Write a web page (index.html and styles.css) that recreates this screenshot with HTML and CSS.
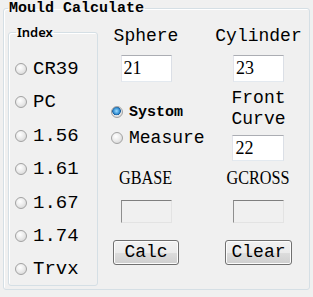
FILE: index.html
```html
<!DOCTYPE html>
<html>
<head>
<meta charset="utf-8">
<link rel="stylesheet" href="styles.css">
</head>
<body>
<fieldset class="calc">
  <legend class="calc-title">Mould Calculate</legend>
  <div class="calc-body">
    <fieldset class="index">
      <legend class="index-title">Index</legend>
      <div class="index-list">
        <label class="opt"><input type="radio" name="idx" class="radio"><span>CR39</span></label>
        <label class="opt"><input type="radio" name="idx" class="radio"><span>PC</span></label>
        <label class="opt"><input type="radio" name="idx" class="radio"><span>1.56</span></label>
        <label class="opt"><input type="radio" name="idx" class="radio"><span>1.61</span></label>
        <label class="opt"><input type="radio" name="idx" class="radio"><span>1.67</span></label>
        <label class="opt"><input type="radio" name="idx" class="radio"><span>1.74</span></label>
        <label class="opt"><input type="radio" name="idx" class="radio"><span>Trvx</span></label>
      </div>
    </fieldset>
    <div class="panel">
      <div class="lbl c1 r1">Sphere</div>
      <div class="lbl c2 r1">Cylinder</div>
      <input class="tb c1 r2" value="21">
      <input class="tb c2 r2" value="23">
      <div class="mode c1 r3">
        <label class="mopt mopt-small"><input type="radio" name="mode" class="radio" checked><span>Systom</span></label>
        <label class="mopt"><input type="radio" name="mode" class="radio"><span>Measure</span></label>
      </div>
      <div class="front c2 r3">
        <div class="lbl front-lbl">Front<br>Curve</div>
        <input class="tb" value="22">
      </div>
      <div class="glbl c1 r4">GBASE</div>
      <div class="glbl c2 r4">GCROSS</div>
      <input class="ro c1 r5" readonly>
      <input class="ro c2 r5" readonly>
      <button class="btn btn-calc c1 r6">Calc</button>
      <button class="btn btn-clear c2 r6">Clear</button>
    </div>
  </div>
</fieldset>
</body>
</html>
```
FILE: styles.css
```css
html, body {
  margin: 0;
  padding: 0;
  background: #f0f0f0;
  width: 313px;
  height: 297px;
  overflow: hidden;
  color: #000;
}

.calc {
  box-sizing: border-box;
  margin: 0 0 0 3px;
  padding: 0;
  width: 307px;
  height: 290px;
  border: 1px solid #d5dfe5;
  border-radius: 3px;
  box-shadow: inset 1px 1px 0 #fff;
  min-width: 0;
}

.calc-title {
  margin-left: 4px;
  padding: 0 1px;
  font-family: "Liberation Mono", monospace;
  font-weight: bold;
  font-size: 15px;
  line-height: 17px;
}

.calc-body {
  display: flex;
  align-items: flex-start;
}

.index {
  box-sizing: border-box;
  margin: 7px 0 0 4px;
  padding: 0;
  width: 90px;
  height: 262px;
  border: 1px solid #d5dfe5;
  border-radius: 3px;
  box-shadow: inset 1px 1px 0 #fff;
  min-width: 0;
}

.index-title {
  margin-left: 7px;
  padding: 0 1px;
  font-family: "Noto Sans", sans-serif;
  font-weight: 600;
  font-size: 13px;
  line-height: 16px;
}

.index-list {
  display: flex;
  flex-direction: column;
  gap: 13.4px;
  padding: 19px 0 0 6px;
}

.opt, .mopt {
  display: flex;
  align-items: center;
  gap: 6px;
  height: 20px;
  font-family: "Liberation Mono", monospace;
  font-size: 19px;
}

.radio {
  appearance: none;
  -webkit-appearance: none;
  box-sizing: border-box;
  margin: 0;
  width: 12px;
  height: 12px;
  flex: none;
  border-radius: 50%;
  border: 1px solid #a2a2a2;
  background: radial-gradient(circle at 40% 35%, #ffffff 0%, #ececec 45%, #cfcfcf 100%);
}

.radio:checked {
  background:
    radial-gradient(circle at 45% 40%, #9fdcff 0%, #3a96d8 35%, #1b5f9e 50%, transparent 56%),
    radial-gradient(circle at 40% 35%, #ffffff 0%, #ececec 45%, #cfcfcf 100%);
}

.panel {
  display: grid;
  grid-template-columns: 88px 101px;
  grid-template-rows: 20px 36px 79px 27px 35px 42px;
  column-gap: 18px;
  align-items: end;
  justify-items: center;
  padding: 9px 0 0 4px;
}

.c1 { grid-column: 1; }
.c2 { grid-column: 2; }
.r1 { grid-row: 1; }
.r2 { grid-row: 2; }
.r3 { grid-row: 3; }
.r4 { grid-row: 4; }
.r5 { grid-row: 5; }
.r6 { grid-row: 6; }

.lbl {
  font-family: "Liberation Mono", monospace;
  font-size: 18px;
  line-height: 20px;
  white-space: nowrap;
}

.tb {
  box-sizing: border-box;
  width: 51px;
  height: 27px;
  margin: 0;
  padding: 0 2px;
  border: 1px solid;
  border-color: #abadb3 #dbdfe6 #e3e9ef #e2e3ea;
  background: #fff;
  font-family: "Liberation Serif", serif;
  font-size: 18px;
  color: #000;
  outline: none;
}

.mode {
  align-self: start;
  justify-self: start;
  display: flex;
  flex-direction: column;
  padding: 17px 0 0 9px;
}

.mopt {
  height: 26px;
  font-size: 18px;
}

.mopt-small {
  font-size: 15px;
  font-weight: bold;
}

.front {
  display: flex;
  flex-direction: column;
  align-items: center;
  gap: 5px;
}

.front-lbl {
  line-height: 21px;
  text-align: center;
}

.front .tb {
  width: 52px;
  height: 26px;
}

.glbl {
  font-family: "Liberation Serif", serif;
  font-size: 18px;
  line-height: 20px;
  transform: scaleX(0.9);
  white-space: nowrap;
}

.ro {
  box-sizing: border-box;
  width: 51px;
  height: 23px;
  margin: 0;
  padding: 0;
  border: 1px solid;
  border-color: #7f7f7f #e3e3e3 #e3e3e3 #8f8f8f;
  background: #f0f0f0;
  outline: none;
}

.btn {
  box-sizing: border-box;
  height: 25px;
  margin: 0;
  padding: 0;
  border: 1px solid #707070;
  border-radius: 3px;
  box-shadow: inset 0 0 0 1px #fcfcfc;
  background: linear-gradient(#f2f2f2 0%, #ebebeb 50%, #dddddd 51%, #cfcfcf 100%);
  font-family: "Liberation Mono", monospace;
  font-size: 18px;
  line-height: 21px;
  color: #000;
}

.btn-calc { width: 66px; }
.btn-clear { width: 67px; }
```
